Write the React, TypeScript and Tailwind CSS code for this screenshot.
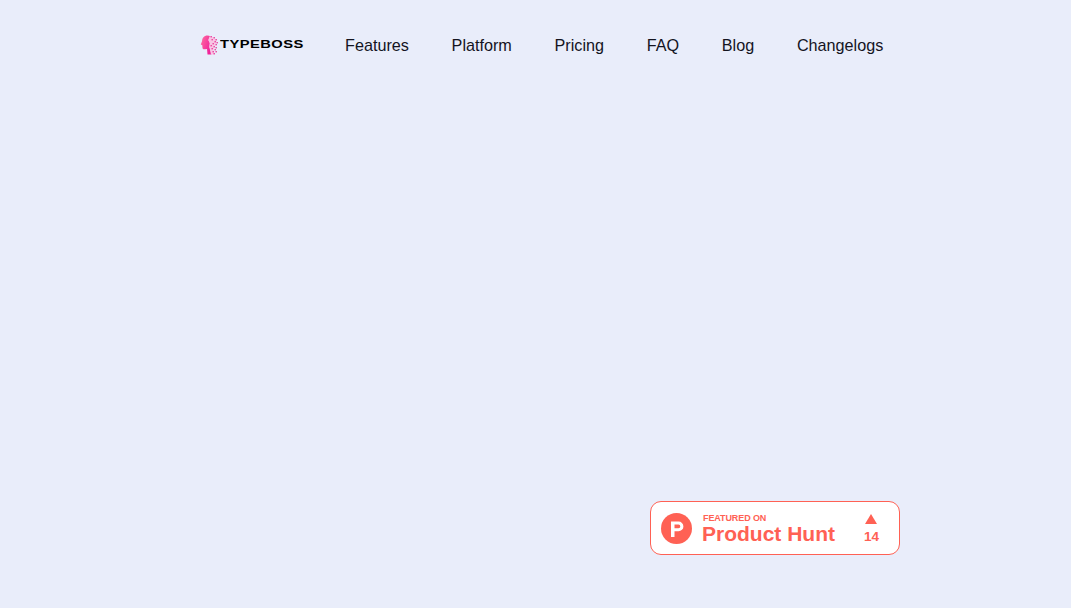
const navItems = ['Features', 'Platform', 'Pricing', 'FAQ', 'Blog', 'Changelogs']

// pixels of the dissolving back of the head
const headDots = [
  [10, 1], [13, 2], [15, 4], [11, 4], [14, 6], [16, 7], [12, 8], [15, 9], [10, 10],
  [13, 11], [15, 12], [11, 13], [14, 14], [12, 16], [15, 16], [13, 18],
]

function LogoHead() {
  return (
    <svg width="19" height="20" viewBox="0 0 18 20" className="shrink-0">
      <defs>
        <linearGradient id="head" x1="0" y1="0" x2="1" y2="0.6">
          <stop offset="0" stopColor="#ff6fa0" />
          <stop offset="1" stopColor="#f0209a" />
        </linearGradient>
      </defs>
      <path
        d="M7 0.5C3.5 0.5 1.6 3 1.6 6L0.3 9.6L1.8 10.2L2 13C2.2 14 3 14.4 4.5 14.2L6.5 14L7 19.5L11 19.5L10 15L9 12L9.5 8L8 5L10 1.5C9 0.8 8 0.5 7 0.5Z"
        fill="url(#head)"
      />
      <path
        d="M9 1.5C12 1.5 15 3 16 5.5L15.5 9L14 12L13 15L14.5 19.5H10.5L9.5 15L8.8 12L9.2 8L7.8 5Z"
        fill="#f8c6e4"
      />
      {headDots.map(([x, y]) => (
        <rect key={`${x}-${y}`} x={x} y={y} width="1.4" height="1.4" fill="#e9409f" />
      ))}
    </svg>
  )
}

function ProductHuntLogo() {
  return (
    <svg width="31" height="31" viewBox="0 0 31 31" className="shrink-0">
      <circle cx="15.5" cy="15.5" r="15.5" fill="#ff6154" />
      <path
        fillRule="evenodd"
        d="M10 8.5h7.5a4.9 4.9 0 0 1 0 9.8h-4v5.7H10zM13.5 11.6v3.6h4a1.8 1.8 0 0 0 0-3.6z"
        fill="#fff"
      />
    </svg>
  )
}

function ProductHuntBadge() {
  return (
    <div className="flex h-[54px] w-[250px] items-center rounded-[11px] border border-[#ff6154] bg-white pl-[10px] pr-5 font-['Liberation_Sans',sans-serif] text-[#ff6154]">
      <ProductHuntLogo />
      <div className="ml-[10px] mt-px flex flex-col">
        <span className="relative top-px pl-px text-[9px] font-bold leading-[10px] tracking-[-0.1px]">FEATURED ON</span>
        <span className="text-[21px] font-bold leading-[23px]">Product Hunt</span>
      </div>
      <div className="ml-auto mt-[2px] flex flex-col items-center">
        <svg width="12" height="10" viewBox="0 0 12 10">
          <path d="M6 0L12 10H0Z" fill="#ff6154" />
        </svg>
        <span className="mt-[5px] text-[13.5px] font-bold leading-[15px]">14</span>
      </div>
    </div>
  )
}

export default function App() {
  return (
    <div className="flex min-h-[608px] flex-col bg-[#e9edfa] font-['Liberation_Sans',sans-serif]">
      <header className="flex items-center pl-[200px] pt-[33px]">
        <div className="flex h-6 w-[103px] items-center">
          <LogoHead />
          <span className="ml-px origin-left scale-x-[1.28] text-[11.5px] font-bold leading-none tracking-[0.35px] text-black">
            TYPEBOSS
          </span>
        </div>
        <nav className="ml-[42px] flex items-center gap-[42.7px] text-[16.2px] leading-6 text-[#14141f]">
          {navItems.map((item) => (
            <a key={item}>{item}</a>
          ))}
        </nav>
      </header>

      <div className="flex justify-end pr-[171px] pt-[444px]">
        <ProductHuntBadge />
      </div>
    </div>
  )
}
